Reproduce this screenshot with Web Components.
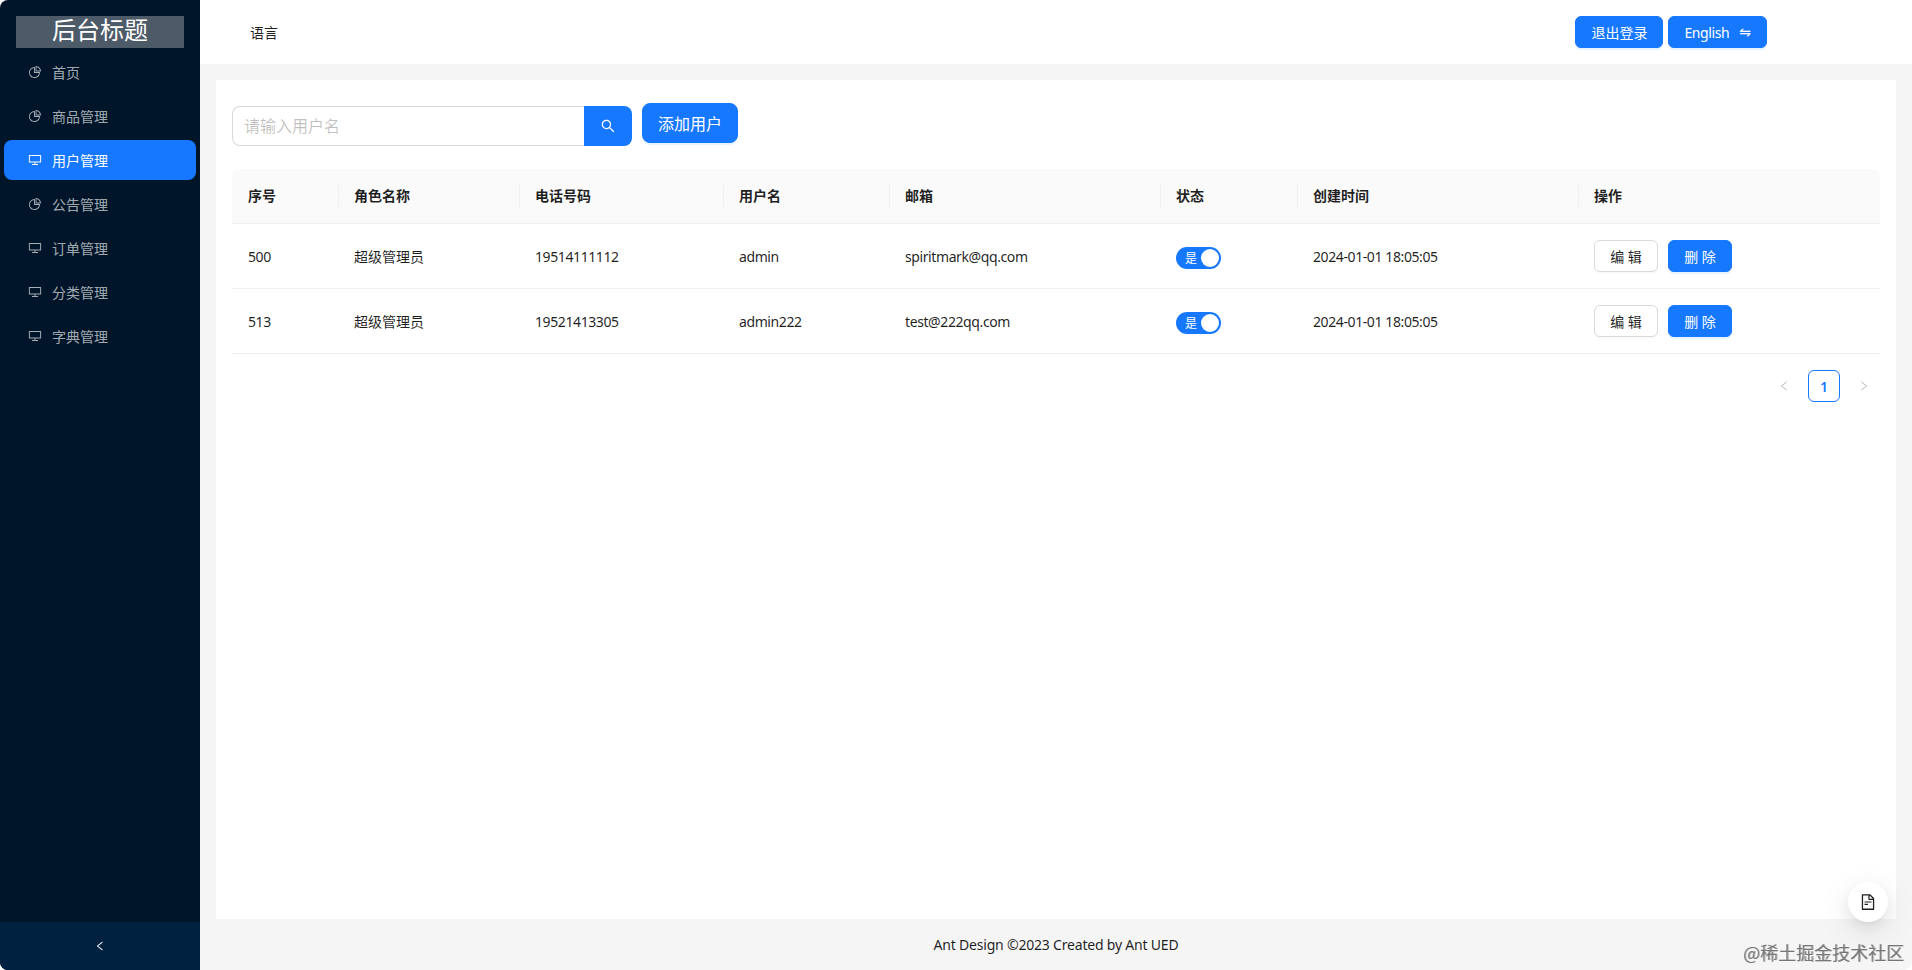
<!DOCTYPE html>
<html lang="zh-CN">
<head>
<meta charset="utf-8">
<title>后台标题</title>
<style>
  html, body { margin: 0; height: 100%; background: #fff; overflow: hidden; }
  body {
    font-family: "Noto Sans", "Noto Sans CJK SC", sans-serif;
    font-size: 14px;
    color: rgba(0, 0, 0, .88);
  }
</style>
</head>
<body>
<app-shell>
  <side-menu slot="side">
    <menu-item icon="pie">首页</menu-item>
    <menu-item icon="pie">商品管理</menu-item>
    <menu-item icon="desktop" selected>用户管理</menu-item>
    <menu-item icon="pie">公告管理</menu-item>
    <menu-item icon="desktop">订单管理</menu-item>
    <menu-item icon="desktop">分类管理</menu-item>
    <menu-item icon="desktop">字典管理</menu-item>
  </side-menu>
  <top-bar slot="top"></top-bar>
  <user-page></user-page>
</app-shell>
<float-button></float-button>
<water-mark>@稀土掘金技术社区</water-mark>

<script>
// ant icons, viewBox is always 0 0 1024 1024
const ICONS = {
  pie: 'M864 518H506V160c0-4.4-3.6-8-8-8h-26a398.46 398.46 0 00-282.8 117.1 398.19 398.19 0 00-85.7 127.1A397.61 397.61 0 0072 552a398.46 398.46 0 00117.1 282.8c36.7 36.7 79.5 65.6 127.1 85.7A397.61 397.61 0 00472 952a398.46 398.46 0 00282.8-117.1c36.7-36.7 65.6-79.5 85.7-127.1A397.61 397.61 0 00872 552v-26c0-4.4-3.6-8-8-8zM705.7 787.8A331.59 331.59 0 01470.4 884c-88.1-.4-170.9-34.9-233.2-97.2C174.5 724.1 140 640.7 140 552c0-88.7 34.5-172.1 97.2-234.8 54.6-54.6 124.9-87.9 200.8-95.5V586h364.3c-7.7 76.3-41.3 147-96.6 201.8zM952 462.4l-2.6-28.2c-8.5-92.1-49.4-179-115.2-244.6A399.4 399.4 0 00589 74.6L560.7 72c-4.7-.4-8.7 3.2-8.7 7.9V464c0 4.4 3.6 8 8 8l384-1c4.7 0 8.4-4 8-8.6zm-332.2-58.2V147.6a332.24 332.24 0 01166.4 89.8c45.7 45.6 77 103.6 90 166.1l-256.4.7z',
  desktop: 'M928 140H96c-17.7 0-32 14.3-32 32v496c0 17.7 14.3 32 32 32h380v112H304c-8.8 0-16 7.2-16 16v48c0 4.4 3.6 8 8 8h432c4.4 0 8-3.6 8-8v-48c0-8.8-7.2-16-16-16H548V700h380c17.7 0 32-14.3 32-32V172c0-17.7-14.3-32-32-32zm-40 488H136V212h752v416z',
  search: 'M909.6 854.5L649.9 594.8C690.2 542.7 712 479 712 412c0-80.2-31.3-155.4-87.9-212.1-56.6-56.7-132-87.9-212.1-87.9s-155.5 31.3-212.1 87.9C143.2 256.5 112 331.8 112 412c0 80.1 31.3 155.5 87.9 212.1C256.5 680.8 331.8 712 412 712c67 0 130.6-21.8 182.7-62l259.7 259.6a8.2 8.2 0 0011.6 0l43.6-43.5a8.2 8.2 0 000-11.6zM570.4 570.4C528 612.7 471.8 636 412 636s-116-23.3-158.4-65.6C211.3 528 188 471.8 188 412s23.3-116.1 65.6-158.4C296 211.3 352.2 188 412 188s116.1 23.2 158.4 65.6S636 352.2 636 412s-23.3 116.1-65.6 158.4z',
  left: 'M724 218.3V141c0-6.7-7.7-10.4-12.9-6.3L260.3 486.8a31.86 31.86 0 000 50.3l450.8 352.1c5.3 4.1 12.9.4 12.9-6.3v-77.3c0-4.9-2.3-9.6-6.1-12.6l-360-281 360-281.1c3.8-3 6.1-7.7 6.1-12.6z',
  right: 'M765.7 486.8L314.9 134.7A7.97 7.97 0 00302 141v77.3c0 4.9 2.3 9.6 6.1 12.6l360 281.1-360 281.1c-3.9 3-6.1 7.7-6.1 12.6V883c0 6.7 7.7 10.4 12.9 6.3l450.8-352.1a31.96 31.96 0 000-50.4z',
  file: 'M854.6 288.6L639.4 73.4c-6-6-14.1-9.4-22.6-9.4H192c-17.7 0-32 14.3-32 32v832c0 17.7 14.3 32 32 32h640c17.7 0 32-14.3 32-32V311.3c0-8.5-3.4-16.7-9.4-22.7zM790.2 326H602V137.8L790.2 326zm1.8 562H232V136h302v216a42 42 0 0042 42h216v494zM504 618H320c-4.4 0-8 3.6-8 8v48c0 4.4 3.6 8 8 8h184c4.4 0 8-3.6 8-8v-48c0-4.4-3.6-8-8-8zM312 490v48c0 4.4 3.6 8 8 8h384c4.4 0 8-3.6 8-8v-48c0-4.4-3.6-8-8-8H320c-4.4 0-8 3.6-8 8z'
};

class AppIcon extends HTMLElement {
  connectedCallback() {
    const size = this.getAttribute('size') || 14;
    this.attachShadow({ mode: 'open' }).innerHTML = `
      <style>
        :host { display: inline-flex; line-height: 0; }
      </style>
      <svg width="${size}" height="${size}" viewBox="0 0 1024 1024" fill="currentColor">
        <path d="${ICONS[this.getAttribute('name')]}"></path>
      </svg>`;
  }
}

class AppShell extends HTMLElement {
  constructor() {
    super();
    this.attachShadow({ mode: 'open' }).innerHTML = `
      <style>
        :host {
          display: grid;
          grid-template-columns: 200px 1fr;
          height: 970px;
          background: #f5f5f5;
          border-radius: 8px;
          overflow: hidden;
        }
        .main { display: flex; flex-direction: column; min-width: 0; }
      </style>
      <slot name="side"></slot>
      <div class="main">
        <slot name="top"></slot>
        <slot></slot>
      </div>`;
  }
}

class SideMenu extends HTMLElement {
  constructor() {
    super();
    this.attachShadow({ mode: 'open' }).innerHTML = `
      <style>
        :host {
          display: flex;
          flex-direction: column;
          background: #001529;
          color: rgba(255, 255, 255, .65);
        }
        .logo {
          height: 32px;
          margin: 16px;
          background: rgba(255, 255, 255, .3);
          color: #fff;
          font-size: 24px;
          line-height: 28px;
          text-align: center;
        }
        nav {
          flex: 1;
          display: flex;
          flex-direction: column;
          gap: 4px;
          padding: 4px 4px 0;
          margin-top: -16px;
        }
        .trigger {
          height: 48px;
          display: flex;
          align-items: center;
          justify-content: center;
          background: #002140;
          color: #fff;
        }
      </style>
      <div class="logo">后台标题</div>
      <nav><slot></slot></nav>
      <div class="trigger"><app-icon name="left" size="12"></app-icon></div>`;
  }
}

class MenuItem extends HTMLElement {
  constructor() {
    super();
    this.attachShadow({ mode: 'open' });
  }

  connectedCallback() {
    this.shadowRoot.innerHTML = `
      <style>
        :host {
          display: flex;
          align-items: center;
          gap: 10px;
          height: 40px;
          padding-left: 24px;
          border-radius: 8px;
        }
        :host([selected]) { background: #1677ff; color: #fff; }
      </style>
      <app-icon name="${this.getAttribute('icon')}" size="14"></app-icon>
      <span><slot></slot></span>`;
  }
}

class AntButton extends HTMLElement {
  constructor() {
    super();
    this.attachShadow({ mode: 'open' }).innerHTML = `
      <style>
        :host {
          display: inline-flex;
          align-items: center;
          justify-content: center;
          box-sizing: border-box;
          height: 32px;
          padding: 0 15px;
          border: 1px solid #d9d9d9;
          border-radius: 6px;
          background: #fff;
          color: rgba(0, 0, 0, .88);
          font-size: 14px;
          white-space: nowrap;
          box-shadow: 0 2px 0 rgba(0, 0, 0, .02);
        }
        :host([primary]) {
          background: #1677ff;
          border-color: #1677ff;
          color: #fff;
          box-shadow: 0 2px 0 rgba(5, 145, 255, .1);
        }
        :host([large]) {
          height: 40px;
          font-size: 16px;
          border-radius: 8px;
        }
      </style>
      <slot></slot>`;
  }
}

class TopBar extends HTMLElement {
  constructor() {
    super();
    this.attachShadow({ mode: 'open' }).innerHTML = `
      <style>
        :host {
          display: flex;
          align-items: center;
          height: 64px;
          padding-left: 50px;
          padding-right: 145px;
          background: #fff;
        }
        .lang { flex: 1; }
        .actions { display: flex; gap: 5px; }
        .latin { letter-spacing: -.4px; }
        .swap {
          margin-left: 10px;
          font-family: "DejaVu Sans", sans-serif;
          font-size: 14px;
        }
      </style>
      <div class="lang">语言</div>
      <div class="actions">
        <ant-button primary>退出登录</ant-button>
        <ant-button primary><span class="latin">English</span><span class="swap">⇋</span></ant-button>
      </div>`;
  }
}

class SearchBox extends HTMLElement {
  constructor() {
    super();
    this.attachShadow({ mode: 'open' }).innerHTML = `
      <style>
        :host { display: flex; width: 400px; height: 40px; }
        input {
          flex: 1;
          min-width: 0;
          box-sizing: border-box;
          padding: 0 11px;
          border: 1px solid #d9d9d9;
          border-right: 0;
          border-radius: 8px 0 0 8px;
          font: inherit;
          font-size: 16px;
          outline: none;
        }
        input::placeholder { color: rgba(0, 0, 0, .25); }
        button {
          display: flex;
          align-items: center;
          justify-content: center;
          width: 48px;
          padding: 0;
          border: 0;
          border-radius: 0 8px 8px 0;
          background: #1677ff;
          color: #fff;
        }
      </style>
      <input placeholder="请输入用户名">
      <button><app-icon name="search" size="16"></app-icon></button>`;
  }
}

class StatusSwitch extends HTMLElement {
  constructor() {
    super();
    this.attachShadow({ mode: 'open' }).innerHTML = `
      <style>
        :host {
          display: inline-flex;
          align-items: center;
          justify-content: space-between;
          box-sizing: border-box;
          width: 45px;
          height: 22px;
          padding: 0 2px 0 9px;
          margin-top: 4px;
          border-radius: 11px;
          background: #1677ff;
          color: #fff;
          font-size: 12px;
        }
        i { width: 18px; height: 18px; border-radius: 50%; background: #fff; }
      </style>
      <slot></slot><i></i>`;
  }
}

const COLUMNS = ['序号', '角色名称', '电话号码', '用户名', '邮箱', '状态', '创建时间', '操作'];
const USERS = [
  ['500', '超级管理员', '19514111112', 'admin', 'spiritmark@qq.com', '2024-01-01 18:05:05'],
  ['513', '超级管理员', '19521413305', 'admin222', 'test@222qq.com', '2024-01-01 18:05:05']
];

class UserTable extends HTMLElement {
  connectedCallback() {
    const head = COLUMNS.map(c => `<div class="th">${c}</div>`).join('');
    const rows = USERS.map(u => `
      <div class="tr">
        <div class="td latin">${u[0]}</div>
        <div class="td">${u[1]}</div>
        <div class="td latin">${u[2]}</div>
        <div class="td latin">${u[3]}</div>
        <div class="td latin">${u[4]}</div>
        <div class="td"><status-switch>是</status-switch></div>
        <div class="td latin">${u[5]}</div>
        <div class="td ops">
          <ant-button>编 辑</ant-button>
          <ant-button primary>删 除</ant-button>
        </div>
      </div>`).join('');
    this.attachShadow({ mode: 'open' }).innerHTML = `
      <style>
        :host { display: block; }
        .thead, .tr {
          display: grid;
          grid-template-columns: 106px 181px 204px 166px 271px 137px 281px 302px;
          border-bottom: 1px solid #f0f0f0;
        }
        .thead { background: #fafafa; border-radius: 8px 8px 0 0; }
        .th {
          position: relative;
          padding: 16px;
          line-height: 22px;
          font-weight: 600;
        }
        .th + .th::before {
          content: "";
          position: absolute;
          left: 0;
          top: 50%;
          width: 1px;
          height: 22px;
          margin-top: -11px;
          background: #f0f0f0;
        }
        .tr { height: 64px; }
        .td { display: flex; align-items: center; padding: 0 16px; }
        .latin { letter-spacing: -.4px; }
        .ops { gap: 10px; }
        .ops ant-button { width: 64px; padding: 0; }
      </style>
      <div class="thead">${head}</div>
      ${rows}`;
  }
}

class PageNav extends HTMLElement {
  constructor() {
    super();
    this.attachShadow({ mode: 'open' }).innerHTML = `
      <style>
        :host {
          display: flex;
          justify-content: flex-end;
          gap: 8px;
          margin-top: 16px;
        }
        div {
          display: flex;
          align-items: center;
          justify-content: center;
          box-sizing: border-box;
          width: 32px;
          height: 32px;
          color: rgba(0, 0, 0, .25);
        }
        .on {
          border: 1px solid #1677ff;
          border-radius: 6px;
          color: #1677ff;
          font-weight: 600;
        }
      </style>
      <div><app-icon name="left" size="12"></app-icon></div>
      <div class="on">1</div>
      <div><app-icon name="right" size="12"></app-icon></div>`;
  }
}

class UserPage extends HTMLElement {
  constructor() {
    super();
    this.attachShadow({ mode: 'open' }).innerHTML = `
      <style>
        :host { flex: 1; display: flex; flex-direction: column; min-height: 0; }
        .card {
          flex: 1;
          margin: 16px 16px 0;
          padding: 23px 16px 0;
          background: #fff;
        }
        .tools { display: flex; align-items: flex-start; gap: 10px; margin-bottom: 23px; }
        search-box { margin-top: 3px; }
        footer {
          height: 51px;
          display: flex;
          align-items: center;
          justify-content: center;
          letter-spacing: -.2px;
        }
      </style>
      <div class="card">
        <div class="tools">
          <search-box></search-box>
          <ant-button primary large>添加用户</ant-button>
        </div>
        <user-table></user-table>
        <page-nav></page-nav>
      </div>
      <footer>Ant Design ©2023 Created by Ant UED</footer>`;
  }
}

class FloatButton extends HTMLElement {
  constructor() {
    super();
    this.attachShadow({ mode: 'open' }).innerHTML = `
      <style>
        :host {
          position: fixed;
          right: 24px;
          bottom: 48px;
          width: 40px;
          height: 40px;
          display: flex;
          align-items: center;
          justify-content: center;
          border-radius: 50%;
          background: #fff;
          box-shadow: 0 6px 16px rgba(0, 0, 0, .08), 0 3px 6px -4px rgba(0, 0, 0, .12), 0 9px 28px 8px rgba(0, 0, 0, .05);
        }
      </style>
      <app-icon name="file" size="18"></app-icon>`;
  }
}

class WaterMark extends HTMLElement {
  constructor() {
    super();
    this.attachShadow({ mode: 'open' }).innerHTML = `
      <style>
        :host {
          position: fixed;
          right: 8px;
          bottom: 6px;
          font-family: "Noto Sans CJK SC", sans-serif;
          font-size: 18px;
          line-height: 24px;
          color: rgba(90, 90, 90, .7);
          text-shadow: 1px 0 0 rgba(120, 120, 120, .5);
        }
      </style>
      <slot></slot>`;
  }
}

customElements.define('app-icon', AppIcon);
customElements.define('app-shell', AppShell);
customElements.define('side-menu', SideMenu);
customElements.define('menu-item', MenuItem);
customElements.define('ant-button', AntButton);
customElements.define('top-bar', TopBar);
customElements.define('search-box', SearchBox);
customElements.define('status-switch', StatusSwitch);
customElements.define('user-table', UserTable);
customElements.define('page-nav', PageNav);
customElements.define('user-page', UserPage);
customElements.define('float-button', FloatButton);
customElements.define('water-mark', WaterMark);
</script>
</body>
</html>
